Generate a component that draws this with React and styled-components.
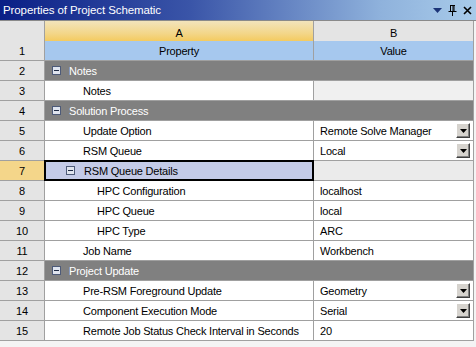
import React from "react";
import styled, { createGlobalStyle } from "styled-components";

const Global = createGlobalStyle`
  html, body { margin: 0; padding: 0; background: #ffffff; }
  body { font-family: "Liberation Sans", Arial, sans-serif; }
`;

const Window = styled.div`
  width: 476px;
  height: 347px;
  background: #f4f4f4;
  display: flex;
  flex-direction: column;
  overflow: hidden;
`;

const TitleBar = styled.div`
  height: 20px;
  flex: none;
  display: flex;
  align-items: center;
  padding-left: 3px;
  padding-right: 4px;
  background: linear-gradient(to right, #0a1f86 0%, #3a55a8 40%, #8fb2dc 80%, #a8cbea 100%);
  border-bottom: 1px solid #8a8a8a;
`;

const Title = styled.div`
  flex: 1;
  color: #ffffff;
  font-family: "Liberation Sans", Arial, sans-serif;
  font-size: 11.5px;
  letter-spacing: -0.1px;
`;

const TitleIcons = styled.div`
  display: flex;
  align-items: center;
  gap: 6px;
`;

const Grid = styled.div`
  display: grid;
  grid-template-columns: 45px 269px 160px;
  grid-auto-rows: 20px;
  width: 474px;
  font-family: "Liberation Sans", Arial, sans-serif;
  font-size: 11px;
  letter-spacing: -0.2px;
  color: #000;
`;

const Cell = styled.div`
  position: relative;
  box-sizing: border-box;
  border-right: 1px solid #a0a0a0;
  border-bottom: 1px solid #a0a0a0;
  display: flex;
  align-items: center;
  white-space: nowrap;
  overflow: visible;
  background: ${(p) => p.$bg || "#ffffff"};
  justify-content: ${(p) => (p.$center ? "center" : "flex-start")};
  padding-left: ${(p) => p.$pad || 0}px;
`;

const HeadCell = styled(Cell)`
  height: 24px;
  justify-content: center;
  background: ${(p) =>
    p.$active ? "linear-gradient(to bottom, #f2e4bc 0%, #f3d688 55%, #f4c650 100%)" : "#e4e4e4"};
`;

const NumCell = styled(Cell)`
  justify-content: center;
  background: ${(p) => (p.$sel ? "#f4d68a" : "#e4e4e4")};
`;

const CatCell = styled(Cell)`
  grid-column: 2 / span 2;
  background: #808080;
  color: #ffffff;
  padding-left: 7px;
  gap: 8px;
`;

const SelCell = styled(Cell)`
  background: #c4cbe7;
  gap: 9px;
  padding-left: 21px;
  &::after {
    content: "";
    position: absolute;
    left: -1px;
    top: -1px;
    right: -1px;
    bottom: -1px;
    border: 2px solid #000;
    pointer-events: none;
  }
`;

const DropBtn = styled.div`
  position: absolute;
  right: 3px;
  top: 2px;
  width: 14px;
  height: 15px;
  box-sizing: border-box;
  background: #d6d3ce;
  border-top: 1px solid #ffffff;
  border-left: 1px solid #ffffff;
  border-right: 1px solid #404040;
  border-bottom: 1px solid #404040;
  box-shadow: inset -1px -1px 0 #808080;
  display: flex;
  align-items: center;
  justify-content: center;
`;

const Minus = () => (
  <svg width="9" height="9" viewBox="0 0 9 9" style={{ flex: "none" }}>
    <rect x="0.5" y="0.5" width="8" height="8" fill="#dfe4ee" stroke="#4d5a78" />
    <line x1="2" y1="4.5" x2="7" y2="4.5" stroke="#1e2a44" strokeWidth="1" />
  </svg>
);

const Drop = () => (
  <DropBtn>
    <svg width="7" height="4" viewBox="0 0 7 4">
      <path d="M0 0H7L3.5 4Z" fill="#000" />
    </svg>
  </DropBtn>
);

const rows = [
  { n: 2, cat: "Notes" },
  { n: 3, p: "Notes", lvl: 1, v: "", vbg: "#f0f0f0" },
  { n: 4, cat: "Solution Process" },
  { n: 5, p: "Update Option", lvl: 1, v: "Remote Solve Manager", drop: true },
  { n: 6, p: "RSM Queue", lvl: 1, v: "Local", drop: true },
  { n: 7, sel: "RSM Queue Details" },
  { n: 8, p: "HPC Configuration", lvl: 2, v: "localhost" },
  { n: 9, p: "HPC Queue", lvl: 2, v: "local" },
  { n: 10, p: "HPC Type", lvl: 2, v: "ARC" },
  { n: 11, p: "Job Name", lvl: 1, v: "Workbench" },
  { n: 12, cat: "Project Update" },
  { n: 13, p: "Pre-RSM Foreground Update", lvl: 1, v: "Geometry", drop: true },
  { n: 14, p: "Component Execution Mode", lvl: 1, v: "Serial", drop: true },
  { n: 15, p: "Remote Job Status Check Interval in Seconds", lvl: 1, v: "20" },
];

const Pin = () => (
  <svg width="9" height="11" viewBox="0 0 9 11">
    <path d="M2 0.5H7M2.5 0.5V6M6 0.5V6M5 1V6M0.5 6.5H8.5M4.5 6.5V11" stroke="#000" strokeWidth="1" fill="none" />
  </svg>
);

const Close = () => (
  <svg width="9" height="9" viewBox="0 0 9 9">
    <path d="M1 1L8 8M8 1L1 8" stroke="#000" strokeWidth="1.6" />
  </svg>
);

const Tri = () => (
  <svg width="9" height="5" viewBox="0 0 9 5">
    <path d="M0 0H9L4.5 5Z" fill="#1b3478" />
  </svg>
);

export default function App() {
  return (
    <>
      <Global />
      <Window>
        <TitleBar>
          <Title>Properties of Project Schematic</Title>
          <TitleIcons>
            <Tri />
            <Pin />
            <Close />
          </TitleIcons>
        </TitleBar>
        <Grid>
          <HeadCell />
          <HeadCell $active>A</HeadCell>
          <HeadCell>B</HeadCell>

          <NumCell>1</NumCell>
          <Cell $bg="#a6c8ee" $center>Property</Cell>
          <Cell $bg="#a6c8ee" $center>Value</Cell>

          {rows.map((r) => {
            if (r.cat)
              return (
                <React.Fragment key={r.n}>
                  <NumCell>{r.n}</NumCell>
                  <CatCell>
                    <Minus />
                    {r.cat}
                  </CatCell>
                </React.Fragment>
              );
            if (r.sel)
              return (
                <React.Fragment key={r.n}>
                  <NumCell $sel>{r.n}</NumCell>
                  <SelCell>
                    <Minus />
                    {r.sel}
                  </SelCell>
                  <Cell $bg="#ebebeb" />
                </React.Fragment>
              );
            return (
              <React.Fragment key={r.n}>
                <NumCell>{r.n}</NumCell>
                <Cell $pad={r.lvl === 1 ? 38 : 52}>{r.p}</Cell>
                <Cell $pad={6} $bg={r.vbg}>
                  {r.v}
                  {r.drop && <Drop />}
                </Cell>
              </React.Fragment>
            );
          })}
        </Grid>
      </Window>
    </>
  );
}
